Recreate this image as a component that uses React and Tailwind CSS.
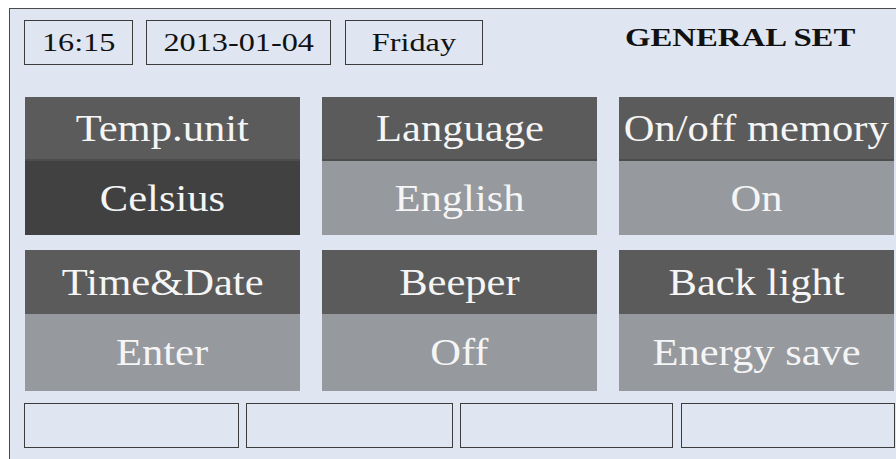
import React from "react";

const serif = { fontFamily: '"Liberation Serif", "Times New Roman", serif' };

function TopBox({ w, children }) {
  return (
    <div
      className={`h-[45px] border border-[#3c3c3c] flex items-center justify-center text-[#111] text-[26px] leading-none ${w}`}
    >
      <span className="inline-block scale-x-[1.24]">{children}</span>
    </div>
  );
}

function Panel({ title, value, headH, valH, valBg, split }) {
  return (
    <div className="w-[275px] flex flex-col text-[#f5f5f5] text-[37px] leading-none">
      <div className={`bg-[#5b5b5b] flex items-center justify-center ${headH}`}>
        <span className="inline-block scale-x-[1.15] whitespace-nowrap">{title}</span>
      </div>
      <div
        className={`flex items-center justify-center ${valH} ${valBg} ${
          split ? "border-t-[2px] border-[#4d4d4d]" : ""
        }`}
      >
        <span className="inline-block scale-x-[1.15] whitespace-nowrap">{value}</span>
      </div>
    </div>
  );
}

export default function App() {
  return (
    <div className="w-[896px] h-[459px] bg-white overflow-hidden pt-[8px] pl-[9px]" style={serif}>
      <div className="w-[900px] h-[460px] border-l border-t border-[#4a4a4a] bg-[#dfe6f1] flex flex-col">
        <div className="flex items-center pt-[11px] pl-[14px]">
          <TopBox w="w-[109px]">16:15</TopBox>
          <div className="w-[13px]" />
          <TopBox w="w-[185px]">2013-01-04</TopBox>
          <div className="w-[14px]" />
          <TopBox w="w-[138px]">Friday</TopBox>
          <div className="w-[142px]" />
          <div className="h-[45px] flex items-start pt-[5px] text-[26px] font-bold text-[#111] leading-none">
            <span className="inline-block scale-x-[1.26] origin-left whitespace-nowrap">GENERAL SET</span>
          </div>
        </div>
        <div className="flex gap-[22px] pl-[15px] pt-[32px]">
          <Panel title="Temp.unit" value="Celsius" headH="h-[62px]" valH="h-[76px]" valBg="bg-[#414141]" split />
          <Panel title="Language" value="English" headH="h-[62px]" valH="h-[76px]" valBg="bg-[#96999e]" split />
          <Panel title="On/off memory" value="On" headH="h-[62px]" valH="h-[76px]" valBg="bg-[#96999e]" split />
        </div>
        <div className="flex gap-[22px] pl-[15px] pt-[15px]">
          <Panel title="Time&Date" value="Enter" headH="h-[64px]" valH="h-[77px]" valBg="bg-[#96999e]" />
          <Panel title="Beeper" value="Off" headH="h-[64px]" valH="h-[77px]" valBg="bg-[#96999e]" />
          <Panel title="Back light" value="Energy save" headH="h-[64px]" valH="h-[77px]" valBg="bg-[#96999e]" />
        </div>
        <div className="flex pl-[14px] pt-[12px]">
          <div className="w-[215px] h-[45px] border border-[#3c3c3c]" />
          <div className="w-[7px]" />
          <div className="w-[207px] h-[45px] border border-[#3c3c3c]" />
          <div className="w-[7px]" />
          <div className="w-[213px] h-[45px] border border-[#3c3c3c]" />
          <div className="w-[8px]" />
          <div className="w-[214px] h-[45px] border border-[#3c3c3c]" />
        </div>
      </div>
    </div>
  );
}
